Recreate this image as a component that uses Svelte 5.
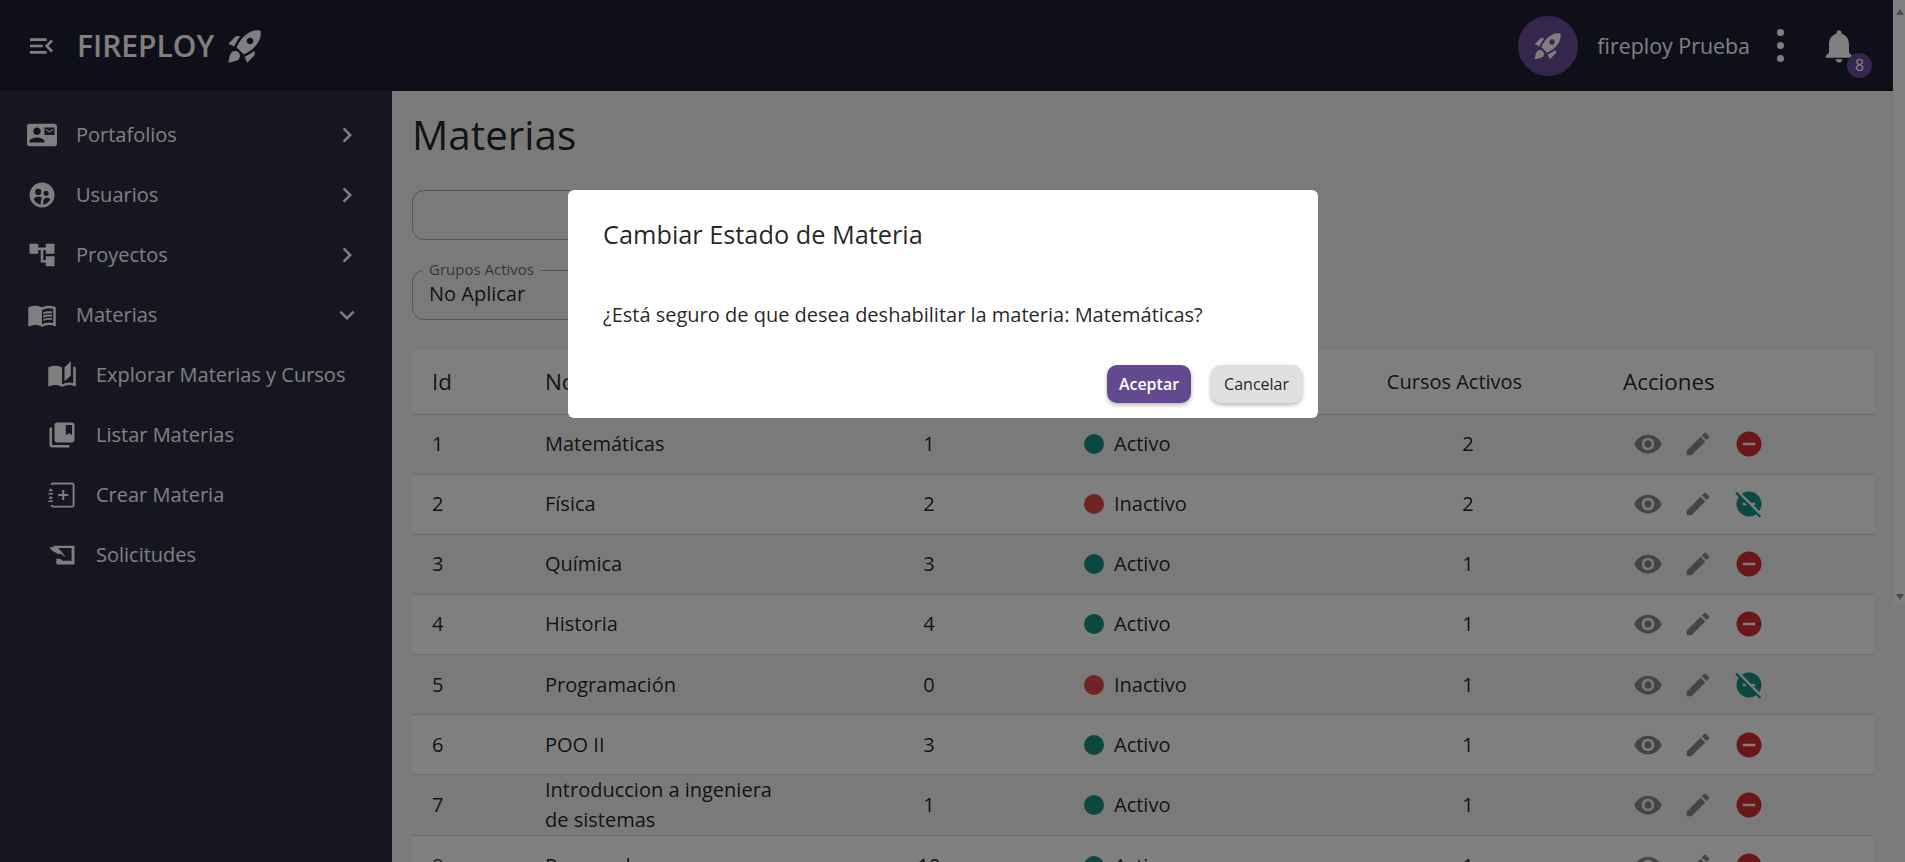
<script>
	const rocket = 'M9.19 6.35c-2.04 2.29-3.44 5.58-3.57 5.89L2 10.69l4.05-4.05c.47-.47 1.15-.68 1.81-.55l1.33.26zM11.17 17s3.74-1.55 5.89-3.7c5.4-5.4 4.5-9.62 4.21-10.57-.95-.3-5.17-1.19-10.57 4.21C8.55 9.09 7 12.83 7 12.83L11.17 17zm6.48-2.19c-2.29 2.04-5.58 3.44-5.89 3.57L13.31 22l4.05-4.05c.47-.47.68-1.15.55-1.81l-.26-1.33zM9 18c0 .83-.34 1.58-.88 2.12C6.94 21.3 2 22 2 22s.7-4.94 1.88-6.12C4.42 15.34 5.17 15 6 15c1.66 0 3 1.34 3 3zm4-9c0-1.1.9-2 2-2s2 .9 2 2-.9 2-2 2-2-.9-2-2z';

	const icons = {
		contact: 'M21 8V7l-3 2-3-2v1l3 2 3-2zm1-5H2C.9 3 0 3.9 0 5v14c0 1.1.9 2 2 2h20c1.1 0 1.99-.9 1.99-2L24 5c0-1.1-.9-2-2-2zM8 6c1.66 0 3 1.34 3 3s-1.34 3-3 3-3-1.34-3-3 1.34-3 3-3zm6 12H2v-1c0-2 4-3.1 6-3.1s6 1.1 6 3.1v1zm8-6h-8V6h8v6z',
		users: 'M12 2a10 10 0 1 0 0 20 10 10 0 0 0 0-20zM9 7a2.500 2.500 0 1 1 0 5 2.500 2.500 0 0 1 0-5zm6.300 1.500a2 2 0 1 1 0 4 2 2 0 0 1 0-4zM11 19.700c-2.500-.4-4.600-2-5.600-4.300.6-1.300 2-2.200 3.600-2.200 1.400 0 2.400.5 3 1.300-.7.9-1 1.900-1 3v2.200zm2 0v-2.200c0-1.900 1.100-3.300 3-3.300 1 0 1.900.4 2.600 1.200-1 2.300-3.100 3.900-5.600 4.300z',
		tree: 'M22 11V3h-7v3H9V3H2v8h7V8h2v10h4v3h7v-8h-7v3h-2V8h2v3z',
		book: 'M21 5c-1.11-.35-2.33-.5-3.5-.5-1.95 0-4.05.4-5.5 1.5-1.45-1.1-3.55-1.5-5.5-1.5S2.45 4.9 1 6v14.65c0 .25.25.5.5.5.1 0 .15-.05.25-.05C3.1 20.45 5.05 20 6.5 20c1.95 0 4.05.4 5.5 1.5 1.35-.85 3.8-1.5 5.5-1.5 1.65 0 3.35.3 4.75 1.05.1.05.15.05.25.05.25 0 .5-.25.5-.5V6c-.6-.45-1.25-.75-2-1zm0 13.5c-1.1-.35-2.3-.5-3.5-.5-1.7 0-4.15.65-5.5 1.5V8c1.35-.85 3.8-1.5 5.5-1.5 1.2 0 2.4.15 3.5.5v11.5zM17.500 10.500c.88 0 1.730.09 2.500.26V9.240c-.79-.15-1.640-.24-2.500-.24-1.700 0-3.240.29-4.500.83v1.660c1.130-.64 2.700-.99 4.500-.99zM13 12.490v1.660c1.130-.64 2.700-.99 4.500-.99.88 0 1.730.09 2.500.26V11.900c-.79-.15-1.640-.24-2.500-.24-1.700 0-3.240.3-4.500.83zM17.500 14.330c-1.700 0-3.240.29-4.500.83v1.660c1.130-.64 2.700-.99 4.500-.99.88 0 1.730.09 2.500.26v-1.520c-.79-.16-1.640-.24-2.500-.24z',
		stories: 'M19 1l-5 5v11l5-4.500V1zM1 6v14.650c0 .25.25.5.5.5.1 0 .15-.05.25-.05C3.100 20.450 5.050 20 6.500 20c1.950 0 4.050.4 5.500 1.500V6c-1.450-1.100-3.550-1.500-5.500-1.500S2.450 4.900 1 6zm22 13.500V6c-.6-.45-1.250-.75-2-1v13.500c-1.100-.35-2.300-.5-3.500-.5-1.700 0-4.150.65-5.500 1.500v2c1.350-.85 3.800-1.500 5.500-1.500 1.650 0 3.350.3 4.750 1.050.1.05.15.05.25.05.25 0 .5-.25.5-.5v-1.100z',
		bookmark: 'M4 6H2v14c0 1.100.9 2 2 2h14v-2H4V6zM20 2H8c-1.100 0-2 .9-2 2v12c0 1.100.9 2 2 2h12c1.100 0 2-.9 2-2V4c0-1.100-.9-2-2-2zm0 10l-2.500-1.500L15 12V4h5v8z',
		create: 'M3 4a2 2 0 0 1 2-2h15a2 2 0 0 1 2 2v16a2 2 0 0 1-2 2H5a2 2 0 0 1-2-2h1.500a.5.5 0 0 0 .5.5h15a.5.5 0 0 0 .5-.5V4a.5.5 0 0 0-.5-.5H5a.5.5 0 0 0-.5.5H3zM3 6.500 4.800 9H1.200L3 6.500zM1.200 10.300h3.600v1.200H1.200v-1.200zM3 12.500 4.800 15H1.200L3 12.500zM1.200 16.300h3.600v1.200H1.200v-1.200zM12.200 8h1.600v3.200H17v1.600h-3.200V16h-1.600v-3.200H9v-1.600h3.200V8z',
		requests: 'M4 4.500h18v15H8.500a1 1 0 0 1-1-1V15h3l2 1.500h7.200V6.300H8L4 4.500zM2 6c3-.8 6-.3 8 1.500 1.500 1.300 3.500 3.800 5 6.500l-4-3c-1.500.6-3 .2-4-1-1.500-.2-3.500-1.700-5-4z',
		eye: 'M12 4.500C7 4.500 2.730 7.610 1 12c1.730 4.390 6 7.500 11 7.500s9.270-3.110 11-7.500c-1.730-4.390-6-7.500-11-7.500zM12 17c-2.760 0-5-2.240-5-5s2.240-5 5-5 5 2.240 5 5-2.240 5-5 5zm0-8c-1.660 0-3 1.340-3 3s1.340 3 3 3 3-1.340 3-3-1.340-3-3-3z',
		edit: 'M3 17.250V21h3.750L17.810 9.940l-3.750-3.750L3 17.250zM20.710 7.040c.39-.39.39-1.020 0-1.410l-2.340-2.340c-.39-.39-1.020-.39-1.410 0l-1.830 1.830 3.750 3.750 1.830-1.830z',
		disable: 'M12 2C6.480 2 2 6.480 2 12s4.480 10 10 10 10-4.480 10-10S17.520 2 12 2zm5 11H7v-2h10v2z',
		enable: 'M17 11v2h-1.460l4.680 4.680C21.340 16.070 22 14.110 22 12c0-5.520-4.480-10-10-10-2.110 0-4.070.66-5.680 1.780L13.540 11H17zM2.270 2.270L1 3.540l2.780 2.780C2.660 7.930 2 9.890 2 12c0 5.520 4.480 10 10 10 2.110 0 4.070-.66 5.680-1.780L20.460 23l1.270-1.270L11 11 2.270 2.270zM7 13v-2h1.460l2 2H7z'
	};

	const menu = [
		{ label: 'Portafolios', icon: icons.contact, chevron: 'right' },
		{ label: 'Usuarios', icon: icons.users, chevron: 'right' },
		{ label: 'Proyectos', icon: icons.tree, chevron: 'right' },
		{ label: 'Materias', icon: icons.book, chevron: 'down' },
		{ label: 'Explorar Materias y Cursos', icon: icons.stories, sub: true },
		{ label: 'Listar Materias', icon: icons.bookmark, sub: true },
		{ label: 'Crear Materia', icon: icons.create, sub: true },
		{ label: 'Solicitudes', icon: icons.requests, sub: true }
	];

	const materias = [
		{ id: 1, nombre: 'Matemáticas', grupos: 1, activo: true, cursos: 2 },
		{ id: 2, nombre: 'Física', grupos: 2, activo: false, cursos: 2 },
		{ id: 3, nombre: 'Química', grupos: 3, activo: true, cursos: 1 },
		{ id: 4, nombre: 'Historia', grupos: 4, activo: true, cursos: 1 },
		{ id: 5, nombre: 'Programación', grupos: 0, activo: false, cursos: 1 },
		{ id: 6, nombre: 'POO II', grupos: 3, activo: true, cursos: 1 },
		{ id: 7, nombre: 'Introduccion a ingeniera de sistemas', grupos: 1, activo: true, cursos: 1 },
		{ id: 8, nombre: 'Reservado', grupos: 10, activo: true, cursos: 1 }
	];
</script>

<div class="app">
	<div class="page">
		<header class="topbar">
			<svg class="menuIcon" viewBox="3 6 18 12"><path d="M3 18h13v-2H3v2zm0-5h10v-2H3v2zm0-7v2h13V6H3zm18 9.590L17.420 12 21 8.410 19.590 7l-5 5 5 5L21 15.590z" /></svg>
			<span class="brand">FIREPLOY</span>
			<svg class="brandRocket" viewBox="0 0 24 24"><path d={rocket} /></svg>
			<div class="spacer"></div>
			<div class="avatar">
				<svg viewBox="0 0 24 24"><path d={rocket} /></svg>
			</div>
			<span class="username">fireploy Prueba</span>
			<div class="dots"><i></i><i></i><i></i></div>
			<div class="bell">
				<svg viewBox="0 0 24 24"><path d="M12 22c1.100 0 2-.9 2-2h-4c0 1.100.89 2 2 2zm6-6v-5c0-3.070-1.640-5.640-4.500-6.320V4c0-.83-.67-1.500-1.500-1.500s-1.500.67-1.500 1.500v.68C7.630 5.360 6 7.920 6 11v5l-2 2v1h16v-1l-2-2z" /></svg>
				<span class="badge">8</span>
			</div>
		</header>

		<div class="body">
			<nav class="sidebar">
				{#each menu as item}
					<div class="navItem" class:sub={item.sub}>
						<svg class="navIcon" viewBox="0 0 24 24"><path d={item.icon} /></svg>
						<span class="navLabel">{item.label}</span>
						{#if item.chevron === 'right'}
							<svg class="chevron" viewBox="0 0 24 24"><path d="M10 6L8.590 7.410 13.170 12l-4.580 4.590L10 18l6-6z" /></svg>
						{:else if item.chevron === 'down'}
							<svg class="chevron" viewBox="0 0 24 24"><path d="M16.590 8.590L12 13.170 7.410 8.590 6 10l6 6 6-6z" /></svg>
						{/if}
					</div>
				{/each}
			</nav>

			<main class="content">
				<h1>Materias</h1>
				<div class="search"></div>
				<div class="filter">
					<span class="filterLabel">Grupos Activos</span>
					<span>No Aplicar</span>
				</div>

				<table>
					<colgroup>
						<col style="width: 113px" />
						<col style="width: 269px" />
						<col style="width: 270px" />
						<col style="width: 269px" />
						<col style="width: 270px" />
						<col />
					</colgroup>
					<thead>
						<tr>
							<th>Id</th>
							<th>Nombre</th>
							<th class="center">Grupos Activos</th>
							<th>Estado</th>
							<th class="center cursos">Cursos Activos</th>
							<th>Acciones</th>
						</tr>
					</thead>
					<tbody>
						{#each materias as m}
							<tr>
								<td>{m.id}</td>
								<td class="nombre">{m.nombre}</td>
								<td class="center">{m.grupos}</td>
								<td>
									<span class="estado">
										<i class="dot" class:off={!m.activo}></i>
										{m.activo ? 'Activo' : 'Inactivo'}
									</span>
								</td>
								<td class="center">{m.cursos}</td>
								<td>
									<div class="actions">
										<svg viewBox="0 0 24 24"><path d={icons.eye} /></svg>
										<svg viewBox="0 0 24 24"><path d={icons.edit} /></svg>
										{#if m.activo}
											<svg class="red" viewBox="0 0 24 24"><path d={icons.disable} /></svg>
										{:else}
											<svg class="green" viewBox="0 0 24 24"><path d={icons.enable} /></svg>
										{/if}
									</div>
								</td>
							</tr>
						{/each}
					</tbody>
				</table>
			</main>
		</div>
	</div>

	<div class="scrollbar">
		<span class="arrowUp"></span>
		<span class="arrowDown"></span>
	</div>

	<div class="backdrop"></div>

	<div class="dialog" role="dialog">
		<h2>Cambiar Estado de Materia</h2>
		<p>¿Está seguro de que desea deshabilitar la materia: Matemáticas?</p>
		<div class="buttons">
			<button class="accept">Aceptar</button>
			<button class="cancel">Cancelar</button>
		</div>
	</div>
</div>

<style>
	:global(body) {
		margin: 0;
		overflow: hidden;
	}

	.app {
		position: relative;
		display: flex;
		height: 862px;
		overflow: hidden;
		background: #f5f5f5;
		font-family: 'Open Sans', 'Noto Sans', sans-serif;
		color: rgba(0, 0, 0, 0.87);
	}

	.page {
		flex: 1;
		min-width: 0;
		display: flex;
		flex-direction: column;
	}

	.topbar {
		flex: none;
		height: 91px;
		display: flex;
		align-items: center;
		background: #1c1e30;
		color: #fff;
		padding-left: 30px;
		padding-right: 34px;
	}

	.topbar svg,
	.sidebar svg {
		fill: currentColor;
	}

	.menuIcon {
		width: 23px;
		height: 16px;
	}

	.brand {
		margin-left: 24px;
		font-size: 30px;
		font-weight: 600;
	}

	.brandRocket {
		width: 40px;
		height: 40px;
		margin-left: 11px;
	}

	.spacer {
		flex: 1;
	}

	.avatar {
		width: 60px;
		height: 60px;
		border-radius: 50%;
		background: #6a4c9c;
		display: flex;
		align-items: center;
		justify-content: center;
	}

	.avatar svg {
		width: 32px;
		height: 32px;
	}

	.username {
		margin-left: 19px;
		font-size: 21.400px;
	}

	.dots {
		margin-left: 27px;
		display: flex;
		flex-direction: column;
		gap: 6px;
	}

	.dots i {
		display: block;
		width: 7px;
		height: 7px;
		border-radius: 50%;
		background: #fff;
	}

	.bell {
		position: relative;
		margin-left: 35px;
		width: 40px;
		height: 40px;
	}

	.bell svg {
		width: 40px;
		height: 40px;
	}

	.badge {
		position: absolute;
		right: -13px;
		bottom: -12px;
		width: 25px;
		height: 25px;
		border-radius: 50%;
		background: #6a4c9c;
		font-size: 16px;
		line-height: 25px;
		text-align: center;
	}

	.body {
		flex: 1;
		min-height: 0;
		display: flex;
	}

	.sidebar {
		flex: none;
		width: 392px;
		box-sizing: border-box;
		padding-top: 14px;
		background: #2a2c40;
		color: #fff;
	}

	.navItem {
		height: 60px;
		display: flex;
		align-items: center;
		padding: 0 30px 0 27px;
		font-size: 20px;
	}

	.navItem.sub {
		padding-left: 47px;
	}

	.navIcon {
		flex: none;
		width: 30px;
		height: 30px;
	}

	.navLabel {
		flex: 1;
		margin-left: 19px;
		margin-bottom: 2px;
	}

	.chevron {
		width: 30px;
		height: 30px;
	}

	.content {
		flex: 1;
		min-width: 0;
		padding: 0 0 0 20px;
		margin-right: 19px;
	}

	h1 {
		margin: 0;
		padding-top: 17px;
		font-size: 40.400px;
		font-weight: 400;
		line-height: 54px;
	}

	.search {
		margin-top: 28px;
		box-sizing: border-box;
		width: 600px;
		height: 50px;
		border: 1px solid rgba(0, 0, 0, 0.3);
		border-radius: 12px;
	}

	.filter {
		position: relative;
		margin-top: 30px;
		box-sizing: border-box;
		height: 50px;
		width: 400px;
		padding: 11px 16px 0;
		border: 1px solid rgba(0, 0, 0, 0.3);
		border-radius: 12px;
		font-size: 20px;
		line-height: 24px;
	}

	.filterLabel {
		position: absolute;
		left: 10px;
		top: -12px;
		padding: 0 6px;
		background: #f5f5f5;
		font-size: 15px;
		line-height: 20px;
		color: rgba(0, 0, 0, 0.6);
	}

	table {
		width: 100%;
		margin-top: 30px;
		border-collapse: collapse;
		table-layout: fixed;
		background: #fff;
	}

	th {
		height: 64px;
		padding: 0 20px;
		box-sizing: border-box;
		text-align: left;
		font-size: 22.400px;
		font-weight: 400;
		border-bottom: 1px solid rgba(0, 0, 0, 0.12);
	}

	th.cursos {
		font-size: 20px;
		padding-right: 47px;
	}

	td {
		height: 60.150px;
		padding: 0 20px;
		box-sizing: border-box;
		font-size: 20px;
		line-height: 30px;
		border-bottom: 1px solid rgba(0, 0, 0, 0.12);
	}

	tbody tr:nth-child(odd) {
		background: #f5f5f5;
	}

	.center {
		text-align: center;
	}

	.estado {
		display: flex;
		align-items: center;
		gap: 10px;
	}

	.dot {
		width: 20px;
		height: 20px;
		border-radius: 50%;
		background: #179080;
	}

	.dot.off {
		background: #e04848;
	}

	.actions {
		display: flex;
		align-items: center;
		gap: 20.500px;
		padding-left: 9.500px;
	}

	.actions svg {
		width: 30px;
		height: 30px;
		fill: #8a8a8a;
	}

	.actions svg.red {
		fill: #d32f2f;
	}

	.actions svg.green {
		fill: #179080;
	}

	.scrollbar {
		position: relative;
		flex: none;
		align-self: flex-start;
		width: 12px;
		height: 605px;
		background: #fff;
	}

	.arrowUp,
	.arrowDown {
		position: absolute;
		left: 3px;
		width: 0;
		height: 0;
		border-left: 4.500px solid transparent;
		border-right: 4.500px solid transparent;
	}

	.arrowUp {
		top: 9px;
		border-bottom: 6px solid #949494;
	}

	.arrowDown {
		bottom: 5px;
		border-top: 6px solid #949494;
	}

	.backdrop {
		position: absolute;
		inset: 0;
		background: rgba(0, 0, 0, 0.5);
	}

	.dialog {
		position: absolute;
		left: 568px;
		top: 190px;
		width: 750px;
		height: 228px;
		box-sizing: border-box;
		padding: 0 16px 15px 35px;
		background: #fff;
		border-radius: 6px;
		display: flex;
		flex-direction: column;
	}

	h2 {
		margin: 0;
		padding-top: 29px;
		font-size: 25.300px;
		font-weight: 500;
		line-height: 30px;
	}

	p {
		margin: 0;
		padding-top: 54px;
		font-size: 20px;
		line-height: 24px;
	}

	.buttons {
		margin-top: auto;
		display: flex;
		justify-content: flex-end;
		gap: 20px;
	}

	button {
		height: 38px;
		padding: 0 13px;
		border: none;
		border-radius: 10px;
		font-family: inherit;
		font-size: 16px;
		box-shadow: 0 2px 4px rgba(0, 0, 0, 0.3);
	}

	.accept {
		padding: 0 12px;
		background: #634a8f;
		color: #fff;
		font-weight: 600;
	}

	.cancel {
		background: #e0e0e0;
		color: rgba(0, 0, 0, 0.87);
	}
</style>
